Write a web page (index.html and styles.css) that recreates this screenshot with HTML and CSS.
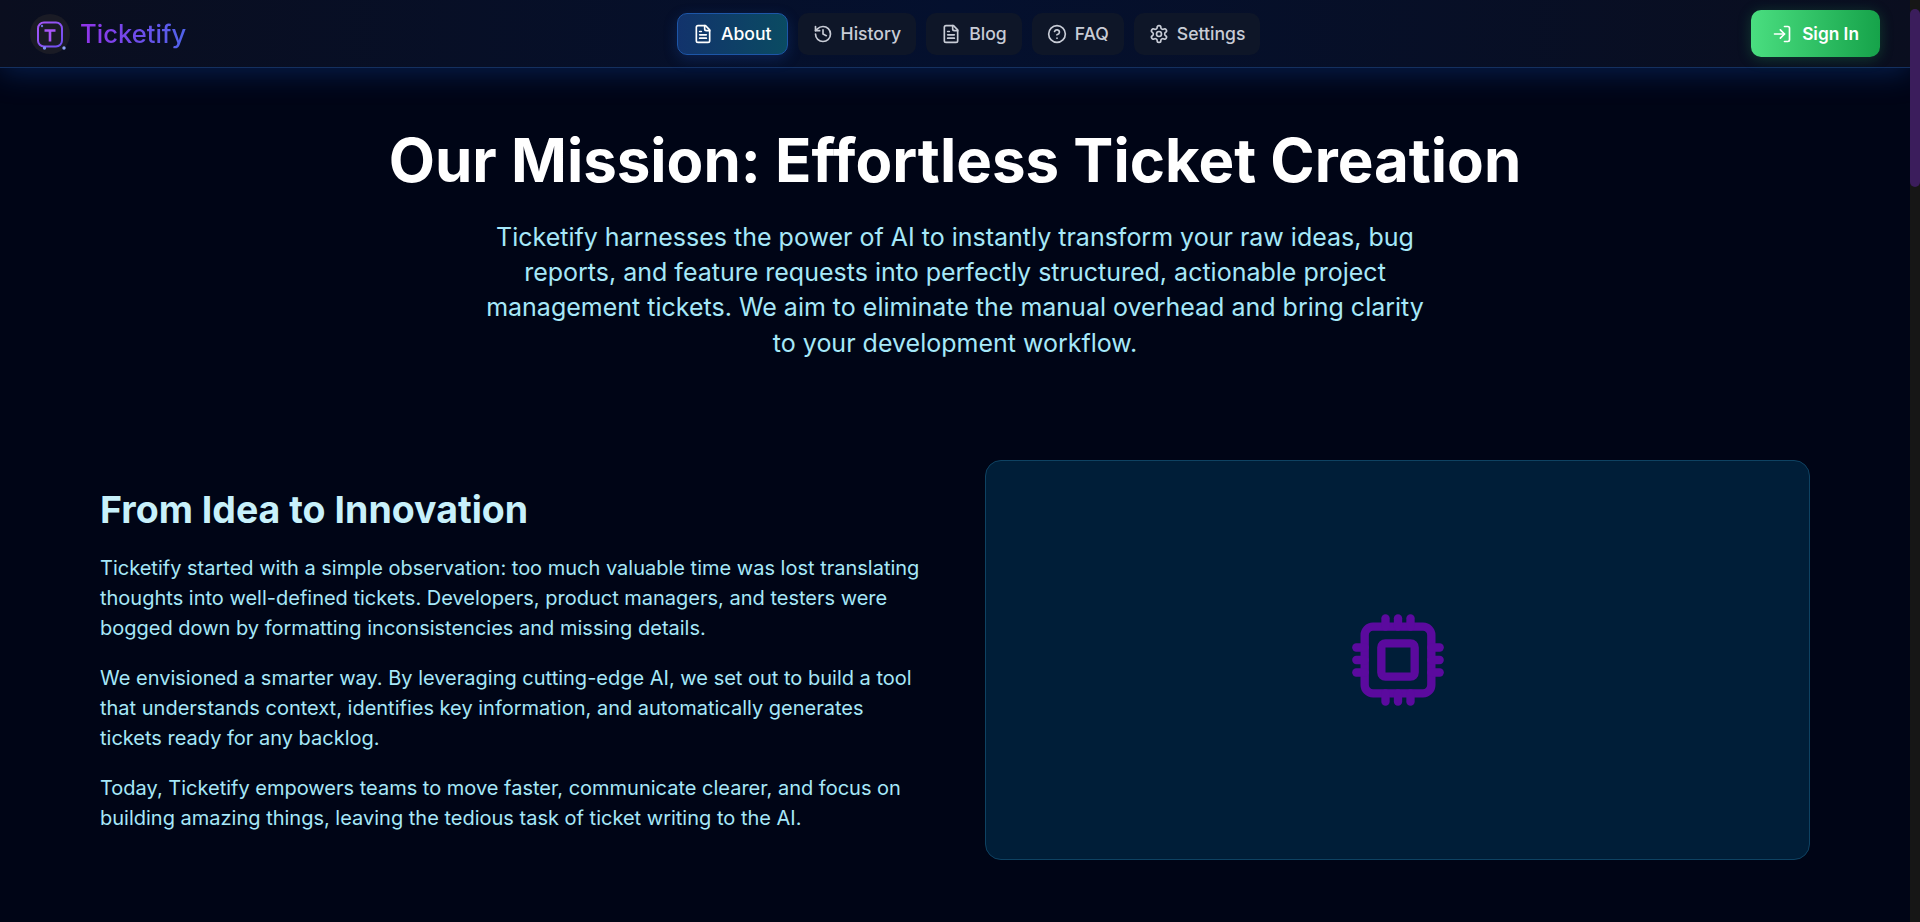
FILE: index.html
```html
<!DOCTYPE html>
<html lang="en">
<head>
    <meta charset="UTF-8">
    <meta name="viewport" content="width=device-width, initial-scale=1.0">
    <title>Ticketify - About</title>
    <link rel="stylesheet" href="styles.css">
</head>
<body>
    <div class="app">
        <header class="topbar">
            <a class="brand" href="#">
                <span class="brand-mark">
                    <svg width="40" height="40" viewBox="0 0 40 40" fill="none">
                        <defs>
                            <linearGradient id="markGrad" x1="0" y1="0" x2="1" y2="1">
                                <stop offset="0" stop-color="#a855f7"/>
                                <stop offset="1" stop-color="#6d4ff0"/>
                            </linearGradient>
                        </defs>
                        <rect x="8" y="8.500" width="24" height="24" rx="6" stroke="url(#markGrad)" stroke-width="2"/>
                        <path d="M14.500 16.500h11M20 16.500v11" stroke="#a855f7" stroke-width="2.600"/>
                        <circle cx="14.500" cy="34" r="1.700" fill="#7c8cf0"/>
                        <circle cx="34" cy="34" r="1.700" fill="#8da2f5"/>
                        <circle cx="12" cy="12" r="1.200" fill="#6a6fd8"/>
                    </svg>
                </span>
                <span class="brand-name">Ticketify</span>
            </a>
            <nav class="nav">
                <a class="nav-item active" href="#">
                    <svg class="icon" viewBox="0 0 24 24"><path d="M15 2H6a2 2 0 0 0-2 2v16a2 2 0 0 0 2 2h12a2 2 0 0 0 2-2V7Z"/><path d="M14 2v4a2 2 0 0 0 2 2h4"/><path d="M10 9H8"/><path d="M16 13H8"/><path d="M16 17H8"/></svg>
                    About
                </a>
                <a class="nav-item" href="#">
                    <svg class="icon" viewBox="0 0 24 24"><path d="M3 12a9 9 0 1 0 9-9 9.750 9.750 0 0 0-6.740 2.740L3 8"/><path d="M3 3v5h5"/><path d="M12 7v5l4 2"/></svg>
                    History
                </a>
                <a class="nav-item" href="#">
                    <svg class="icon" viewBox="0 0 24 24"><path d="M15 2H6a2 2 0 0 0-2 2v16a2 2 0 0 0 2 2h12a2 2 0 0 0 2-2V7Z"/><path d="M14 2v4a2 2 0 0 0 2 2h4"/><path d="M10 9H8"/><path d="M16 13H8"/><path d="M16 17H8"/></svg>
                    Blog
                </a>
                <a class="nav-item" href="#">
                    <svg class="icon" viewBox="0 0 24 24"><circle cx="12" cy="12" r="10"/><path d="M9.090 9a3 3 0 0 1 5.830 1c0 2-3 3-3 3"/><path d="M12 17h.01"/></svg>
                    FAQ
                </a>
                <a class="nav-item" href="#">
                    <svg class="icon" viewBox="0 0 24 24"><path d="M12.220 2h-.44a2 2 0 0 0-2 2v.18a2 2 0 0 1-1 1.730l-.43.25a2 2 0 0 1-2 0l-.15-.08a2 2 0 0 0-2.730.73l-.22.38a2 2 0 0 0 .73 2.730l.15.1a2 2 0 0 1 1 1.720v.51a2 2 0 0 1-1 1.740l-.15.09a2 2 0 0 0-.73 2.730l.22.38a2 2 0 0 0 2.730.73l.15-.08a2 2 0 0 1 2 0l.43.25a2 2 0 0 1 1 1.730V20a2 2 0 0 0 2 2h.44a2 2 0 0 0 2-2v-.18a2 2 0 0 1 1-1.730l.43-.25a2 2 0 0 1 2 0l.15.08a2 2 0 0 0 2.730-.73l.22-.39a2 2 0 0 0-.73-2.730l-.15-.08a2 2 0 0 1-1-1.740v-.5a2 2 0 0 1 1-1.740l.15-.09a2 2 0 0 0 .73-2.730l-.22-.38a2 2 0 0 0-2.730-.73l-.15.08a2 2 0 0 1-2 0l-.43-.25a2 2 0 0 1-1-1.730V4a2 2 0 0 0-2-2z"/><circle cx="12" cy="12" r="3"/></svg>
                    Settings
                </a>
            </nav>
            <a class="signin" href="#">
                <svg class="icon" viewBox="0 0 24 24"><path d="M15 3h4a2 2 0 0 1 2 2v14a2 2 0 0 1-2 2h-4"/><path d="M10 17l5-5-5-5"/><path d="M15 12H3"/></svg>
                Sign In
            </a>
        </header>

        <main class="page">
            <section class="hero">
                <h1>Our Mission: Effortless Ticket Creation</h1>
                <p>Ticketify harnesses the power of AI to instantly transform your raw ideas, bug reports, and feature requests into perfectly structured, actionable project management tickets. We aim to eliminate the manual overhead and bring clarity to your development workflow.</p>
            </section>

            <section class="story">
                <div class="story-text">
                    <h2>From Idea to Innovation</h2>
                    <p>Ticketify started with a simple observation: too much valuable time was lost translating thoughts into well-defined tickets. Developers, product managers, and testers were bogged down by formatting inconsistencies and missing details.</p>
                    <p>We envisioned a smarter way. By leveraging cutting-edge AI, we set out to build a tool that understands context, identifies key information, and automatically generates tickets ready for any backlog.</p>
                    <p>Today, Ticketify empowers teams to move faster, communicate clearer, and focus on building amazing things, leaving the tedious task of ticket writing to the AI.</p>
                </div>
                <div class="story-card">
                    <svg class="chip" viewBox="0 0 24 24"><rect x="4" y="4" width="16" height="16" rx="2"/><rect x="8" y="8" width="8" height="8" rx="1"/><path d="M15 2v2"/><path d="M15 20v2"/><path d="M2 15h2"/><path d="M2 9h2"/><path d="M20 15h2"/><path d="M20 9h2"/><path d="M9 2v2"/><path d="M9 20v2"/><path d="M2 12h2"/><path d="M20 12h2"/><path d="M12 2v2"/><path d="M12 20v2"/></svg>
                </div>
            </section>
        </main>
    </div>
    <div class="scrollbar"><div class="scrollbar-thumb"></div></div>
</body>
</html>
```

FILE: styles.css
```css
* {
    box-sizing: border-box;
}
body {
    margin: 0;
    height: 100vh;
    overflow: hidden;
    display: flex;
    font-family: Inter, "Liberation Sans", sans-serif;
    color: #a6e8f9;
    background: #000516;
}
a {
    text-decoration: none;
    color: inherit;
}
.app {
    flex: 1;
    min-width: 0;
}
.scrollbar {
    width: 10px;
    padding-top: 9px;
    background: #161616;
}
.scrollbar-thumb {
    height: 178px;
    background: #3b1d5c;
    border-radius: 5px;
}

.topbar {
    display: flex;
    justify-content: space-between;
    align-items: center;
    height: 68px;
    padding: 0 30px;
    background: linear-gradient(90deg, #0a0e1f 0%, #04102e 50%, #0a0e1f 100%);
    border-bottom: 1px solid #14305f;
    box-shadow: 0 4px 30px rgba(20, 80, 190, 0.35);
}
.brand {
    display: flex;
    align-items: center;
    gap: 10px;
}
.brand-mark {
    width: 40px;
    height: 40px;
    border-radius: 50%;
    background: #1a1b25;
    display: block;
}
.brand-mark svg {
    display: block;
    overflow: visible;
}
.brand-name {
    font-size: 25.600px;
    font-weight: 500;
    background: linear-gradient(90deg, #9333ea, #4f63ea);
    -webkit-background-clip: text;
    background-clip: text;
    color: transparent;
}
.nav {
    display: flex;
    gap: 10px;
}
.nav-item {
    display: flex;
    align-items: center;
    gap: 8px;
    height: 42px;
    padding: 0 15px;
    border-radius: 10px;
    font-size: 17.600px;
    font-weight: 500;
    color: #c8ccd6;
    background: #0e1628;
}
.nav-item.active {
    color: #fff;
    background: linear-gradient(90deg, #12336c, #0a4b62);
    border: 1px solid #1d56a8;
    box-shadow: 0 4px 14px rgba(30, 90, 200, 0.25);
}
.icon {
    width: 20px;
    height: 20px;
    fill: none;
    stroke: currentColor;
    stroke-width: 2;
    stroke-linecap: round;
    stroke-linejoin: round;
}
.signin {
    display: flex;
    align-items: center;
    gap: 10px;
    height: 47px;
    padding: 0 21px;
    border-radius: 10px;
    font-size: 17.300px;
    font-weight: 600;
    color: #fff;
    background: linear-gradient(90deg, #4ade80, #16a34a);
    box-shadow: 0 2px 14px rgba(34, 197, 94, 0.25);
}

.page {
    padding: 0 100px;
}
.hero {
    text-align: center;
    padding-top: 56px;
}
.hero h1 {
    margin: 0;
    font-size: 60px;
    line-height: 72px;
    font-weight: 700;
    color: #fff;
}
.hero p {
    width: 950px;
    margin: 24px auto 0;
    font-size: 25px;
    line-height: 35.200px;
}
.story {
    display: grid;
    grid-template-columns: 1fr 1fr;
    gap: 60px;
    align-items: center;
    margin-top: 99px;
}
.story-text {
    padding-top: 3px;
}
.story-text h2 {
    margin: 0 0 22px;
    font-size: 37.500px;
    line-height: 42px;
    font-weight: 700;
    color: #c8f1fb;
}
.story-text p {
    margin: 0 0 20px;
    font-size: 20px;
    line-height: 30px;
}
.story-text p:last-child {
    margin-bottom: 0;
}
.story-card {
    display: flex;
    align-items: center;
    justify-content: center;
    height: 400px;
    background: #001e38;
    border: 1px solid #0e4262;
    border-radius: 16px;
}
.chip {
    width: 100px;
    height: 100px;
    fill: none;
    stroke: #5b0a9e;
    stroke-width: 2;
    stroke-linecap: round;
    stroke-linejoin: round;
}
```
